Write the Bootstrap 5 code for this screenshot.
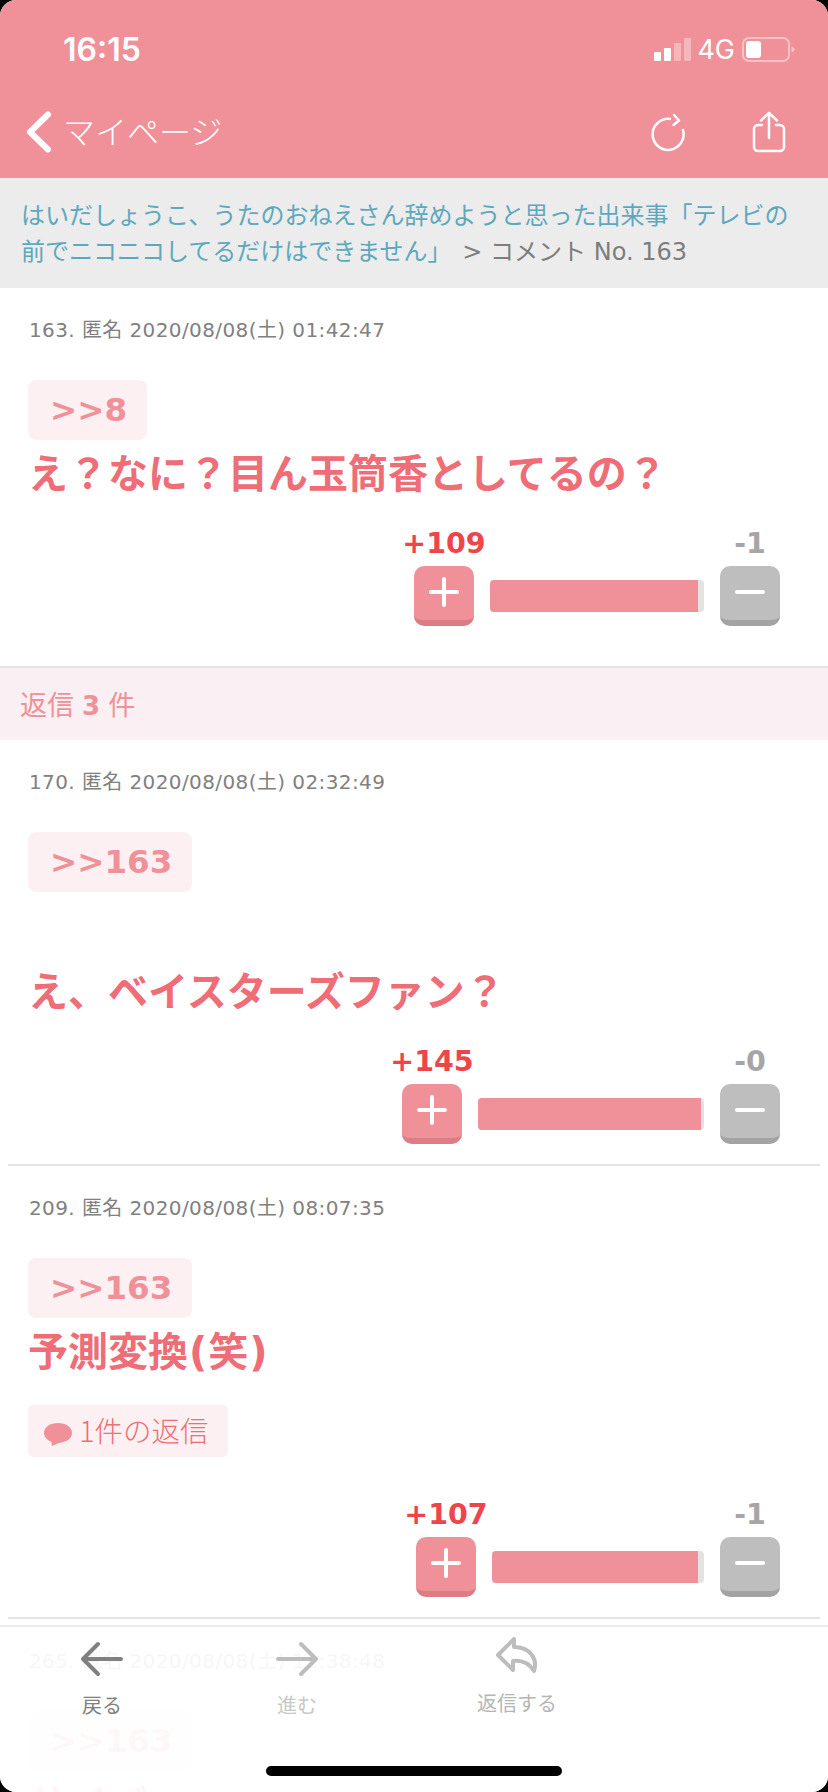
<!DOCTYPE html>
<html lang="ja">
<head>
  <meta charset="UTF-8">
  <title>コメント No. 163</title>
  <meta name="viewport" content="width=device-width, initial-scale=1">
  <link href="https://cdn.jsdelivr.net/npm/bootstrap@5.3.3/dist/css/bootstrap.min.css" rel="stylesheet">
  <style>
    body {
      background-color: #000;
      font-family: "Noto Sans CJK JP", sans-serif;
    }
    .screen {
      width: 828px;
      height: 1792px;
      background-color: #fff;
      border-radius: 16px;
      overflow: hidden;
      position: relative;
    }
    .top-bar {
      background-color: #f09199;
      height: 178px;
      color: #fff;
    }
    .status-row {
      height: 100px;
      padding: 0 32px 0 63px;
    }
    .clock {
      font-family: Inter, sans-serif;
      font-weight: 600;
      font-size: 32px;
    }
    .net-label {
      font-family: Inter, sans-serif;
      font-size: 27px;
      margin: 0 7px 0 6px;
    }
    .nav-row {
      height: 78px;
      padding: 0 40px 14px 25px;
    }
    .nav-title {
      font-size: 32px;
      font-weight: 300;
      margin: 0 0 4px 10px;
    }
    .nav-gap {
      margin-left: 66px;
    }
    .crumb {
      background-color: #ececec;
      height: 110px;
      padding: 18px 21px;
      font-size: 24px;
      line-height: 36px;
      color: #7d7d7d;
    }
    .crumb a {
      color: #5ea8bd;
      text-decoration: none;
    }
    .crumb-tail {
      font-family: "DejaVu Sans", "Noto Sans CJK JP", sans-serif;
    }
    .comment-meta {
      font-family: "DejaVu Sans", "Noto Sans CJK JP", sans-serif;
      font-size: 20px;
      line-height: 30px;
      color: #808080;
      margin: 0;
      padding-top: 27px;
      padding-left: 29px;
      letter-spacing: .4px;
    }
    .quote-pill {
      display: block;
      width: fit-content;
      height: 60px;
      margin: 35px 0 1px 28px;
      padding: 0 20px 0 22px;
      border-radius: 8px;
      background-color: #fcf0f2;
      color: #f09199;
      font-family: "DejaVu Sans", sans-serif;
      font-weight: 700;
      font-size: 32.5px;
      line-height: 60px;
    }
    .comment-body {
      margin: 0;
      padding-left: 28px;
      color: #ef6d77;
      font-size: 40px;
      font-weight: 700;
      line-height: 60px;
    }
    .body-gap {
      height: 66px;
    }
    .wide-paren {
      font-family: "DejaVu Sans", sans-serif;
      margin: 0 1px;
    }
    .vote-row {
      padding-right: 48px;
      margin-top: 27px;
    }
    .vote-row.after-chip {
      margin-top: 42px;
    }
    .vote-up, .vote-down {
      width: 60px;
      flex: none;
    }
    .vote-num {
      height: 32px;
      font-family: "DejaVu Sans", sans-serif;
      font-weight: 700;
      font-size: 28.5px;
      line-height: 32px;
      white-space: nowrap;
      margin-bottom: 6px;
    }
    .vote-up .vote-num {
      color: #ee454b;
    }
    .vote-down .vote-num {
      color: #a6a6a6;
    }
    .vote-btn {
      width: 60px;
      height: 60px;
      border-radius: 10px;
      box-sizing: border-box;
    }
    .vote-btn svg {
      margin-bottom: 2px;
    }
    .vote-up .vote-btn {
      background-color: #f09199;
      border-bottom: 6px solid #dc7d85;
    }
    .vote-down .vote-btn {
      background-color: #bebebe;
      border-bottom: 6px solid #a3a3a3;
    }
    .score-bar {
      height: 32px;
      margin: 52px 16px 0;
      background-color: #e3e3e3;
      border-radius: 4px;
      overflow: hidden;
      flex-grow: 1;
    }
    .score-fill {
      height: 100%;
      background-color: #f09199;
    }
    .replies-head {
      height: 74px;
      margin-top: 40px;
      border-top: 2px solid #e5e5e5;
      background-color: #faeff2;
      color: #f09199;
      font-size: 27px;
      line-height: 72px;
      padding-left: 20px;
    }
    .replies-head b {
      font-family: "DejaVu Sans", sans-serif;
      font-size: 26px;
      margin: 0 2px;
    }
    .item-line {
      border-top: 2px solid #e4e4e4;
      margin: 20px 8px 0;
    }
    .reply-chip {
      display: block;
      width: 200px;
      height: 52px;
      margin: 23px 0 0 28px;
      border-radius: 5px;
      background-color: #fcf0f2;
      color: #ef6d77;
      font-size: 28.5px;
      line-height: 50px;
      font-weight: 300;
      padding-left: 15px;
      white-space: nowrap;
    }
    .bottom-bar {
      position: absolute;
      left: 0;
      right: 0;
      bottom: 0;
      height: 167px;
      background-color: rgba(255, 255, 255, 0.93);
      border-top: 2px solid #ececec;
    }
    .tool-item {
      text-align: center;
      font-size: 20px;
      line-height: 30px;
    }
    .tool-item svg {
      display: block;
      margin: 0 auto;
    }
    .tool-back {
      width: 60px;
      margin: 14px 0 0 72px;
      color: #808080;
    }
    .tool-forward {
      width: 60px;
      margin: 14px 0 0 135px;
      color: #c8c8c8;
    }
    .tool-reply {
      width: 100px;
      margin: 8px 0 0 140px;
      color: #b5b5b5;
    }
    .tool-back div, .tool-forward div {
      margin-top: 13px;
    }
    .tool-reply div {
      margin-top: 13px;
    }
    .home-line {
      position: absolute;
      left: 266px;
      top: 139px;
      width: 296px;
      height: 10px;
      background-color: #000;
      border-radius: 5px;
    }
  </style>
</head>
<body>
<div class="screen">

  <div class="top-bar">
    <div class="status-row d-flex align-items-center justify-content-between">
      <span class="clock">16:15</span>
      <div class="d-flex align-items-center">
        <svg width="37" height="24" viewBox="0 0 37 24">
          <rect x="0" y="14" width="7" height="9" rx="1" fill="#fff"/>
          <rect x="10" y="10" width="7" height="13" rx="1" fill="#fff"/>
          <rect x="20" y="5" width="7" height="18" rx="1" fill="#fff" fill-opacity=".35"/>
          <rect x="30" y="0" width="7" height="23" rx="1" fill="#fff" fill-opacity=".35"/>
        </svg>
        <span class="net-label">4G</span>
        <svg width="54" height="26" viewBox="0 0 54 26">
          <rect x="1" y="1" width="46" height="23" rx="6" fill="none" stroke="#fff" stroke-opacity=".45" stroke-width="2"/>
          <rect x="4" y="4" width="15" height="17" rx="3" fill="#fff"/>
          <path d="M49.500 9.500c2 .5 3 2 3 3s-1 2.500-3 3z" fill="#fff" fill-opacity=".45"/>
        </svg>
      </div>
    </div>
    <div class="nav-row d-flex align-items-center">
      <svg width="28" height="44" viewBox="0 0 28 44">
        <path d="M23 4.500 L5 22 L23 39.500" fill="none" stroke="#fff" stroke-width="6" stroke-linecap="round" stroke-linejoin="round"/>
      </svg>
      <span class="nav-title">マイページ</span>
      <svg class="ms-auto" width="36" height="40" viewBox="0 0 36 40">
        <path d="M20 7 A15.500 15.500 0 1 0 33 18" fill="none" stroke="#fff" stroke-width="2.500" stroke-linecap="round"/>
        <path d="M24 3 L29 8.500 L23.500 13" fill="none" stroke="#fff" stroke-width="2.500" stroke-linecap="round" stroke-linejoin="round"/>
      </svg>
      <svg class="nav-gap" width="36" height="42" viewBox="0 0 36 42">
        <path d="M10 14 H6 A4 4 0 0 0 2 18 V36 A4 4 0 0 0 6 40 H28 A4 4 0 0 0 32 36 V18 A4 4 0 0 0 28 14 H24" fill="none" stroke="#fff" stroke-width="2.500" stroke-linecap="round"/>
        <path d="M17 27 V2 M9 9.500 L17 2 L25 9.500" fill="none" stroke="#fff" stroke-width="2.500" stroke-linecap="round" stroke-linejoin="round"/>
      </svg>
    </div>
  </div>

  <div class="crumb">
    <a href="#">はいだしょうこ、うたのおねえさん辞めようと思った出来事「テレビの前でニコニコしてるだけはできません」</a>&nbsp;&nbsp;<span class="crumb-tail">&gt; コメント No. 163</span>
  </div>

  <!-- 163 -->
  <div class="comment-block">
    <p class="comment-meta">163. 匿名 2020/08/08(土) 01:42:47</p>
    <a class="quote-pill text-decoration-none">&gt;&gt;8</a>
    <p class="comment-body">え？なに？目ん玉筒香としてるの？</p>
    <div class="vote-row d-flex justify-content-end">
      <div class="d-flex" style="width: 366px">
        <div class="vote-up">
          <div class="vote-num d-flex justify-content-center">+109</div>
          <div class="vote-btn d-flex align-items-center justify-content-center">
            <svg width="30" height="30" viewBox="0 0 30 30"><path d="M15 2 V28 M2 15 H28" stroke="#fff" stroke-width="4" stroke-linecap="round"/></svg>
          </div>
        </div>
        <div class="score-bar"><div class="score-fill" style="width: 97.200%"></div></div>
        <div class="vote-down">
          <div class="vote-num d-flex justify-content-center">-1</div>
          <div class="vote-btn d-flex align-items-center justify-content-center">
            <svg width="30" height="30" viewBox="0 0 30 30"><path d="M2 15 H28" stroke="#fff" stroke-width="4" stroke-linecap="round"/></svg>
          </div>
        </div>
      </div>
    </div>
  </div>

  <div class="replies-head">返信 <b>3</b> 件</div>

  <!-- 170 -->
  <div class="comment-block">
    <p class="comment-meta">170. 匿名 2020/08/08(土) 02:32:49</p>
    <a class="quote-pill text-decoration-none">&gt;&gt;163</a>
    <div class="body-gap"></div>
    <p class="comment-body">え、ベイスターズファン？</p>
    <div class="vote-row d-flex justify-content-end">
      <div class="d-flex" style="width: 378px">
        <div class="vote-up">
          <div class="vote-num d-flex justify-content-center">+145</div>
          <div class="vote-btn d-flex align-items-center justify-content-center">
            <svg width="30" height="30" viewBox="0 0 30 30"><path d="M15 2 V28 M2 15 H28" stroke="#fff" stroke-width="4" stroke-linecap="round"/></svg>
          </div>
        </div>
        <div class="score-bar"><div class="score-fill" style="width: 98.500%"></div></div>
        <div class="vote-down">
          <div class="vote-num d-flex justify-content-center">-0</div>
          <div class="vote-btn d-flex align-items-center justify-content-center">
            <svg width="30" height="30" viewBox="0 0 30 30"><path d="M2 15 H28" stroke="#fff" stroke-width="4" stroke-linecap="round"/></svg>
          </div>
        </div>
      </div>
    </div>
  </div>
  <div class="item-line"></div>

  <!-- 209 -->
  <div class="comment-block">
    <p class="comment-meta">209. 匿名 2020/08/08(土) 08:07:35</p>
    <a class="quote-pill text-decoration-none">&gt;&gt;163</a>
    <p class="comment-body">予測変換<span class="wide-paren">(</span>笑<span class="wide-paren">)</span></p>
    <a class="reply-chip text-decoration-none">
      <svg width="30" height="28" viewBox="0 0 30 28"><path d="M15 3 C23 3 29 7 29 13 C29 19 23 22 16 23 L9 26 L8.500 22 C4 20 1 17 1 13 C1 7 7 3 15 3 Z" fill="#f09199"/></svg>
      1件の返信
    </a>
    <div class="vote-row after-chip d-flex justify-content-end">
      <div class="d-flex" style="width: 364px">
        <div class="vote-up">
          <div class="vote-num d-flex justify-content-center">+107</div>
          <div class="vote-btn d-flex align-items-center justify-content-center">
            <svg width="30" height="30" viewBox="0 0 30 30"><path d="M15 2 V28 M2 15 H28" stroke="#fff" stroke-width="4" stroke-linecap="round"/></svg>
          </div>
        </div>
        <div class="score-bar"><div class="score-fill" style="width: 97.200%"></div></div>
        <div class="vote-down">
          <div class="vote-num d-flex justify-content-center">-1</div>
          <div class="vote-btn d-flex align-items-center justify-content-center">
            <svg width="30" height="30" viewBox="0 0 30 30"><path d="M2 15 H28" stroke="#fff" stroke-width="4" stroke-linecap="round"/></svg>
          </div>
        </div>
      </div>
    </div>
  </div>
  <div class="item-line"></div>

  <!-- 265, mostly behind the toolbar -->
  <div class="comment-block">
    <p class="comment-meta">265. 匿名 2020/08/08(土) 11:38:48</p>
    <a class="quote-pill text-decoration-none">&gt;&gt;163</a>
    <p class="comment-body">サイバー</p>
  </div>

  <div class="bottom-bar d-flex align-items-start">
    <div class="tool-item tool-back">
      <svg width="44" height="36" viewBox="0 0 44 36"><path d="M41 18 H4 M18 3 L3 18 L18 33" fill="none" stroke="#808080" stroke-width="4" stroke-linecap="round" stroke-linejoin="round"/></svg>
      <div>戻る</div>
    </div>
    <div class="tool-item tool-forward">
      <svg width="44" height="36" viewBox="0 0 44 36"><path d="M3 18 H40 M26 3 L41 18 L26 33" fill="none" stroke="#bdbdbd" stroke-width="4" stroke-linecap="round" stroke-linejoin="round"/></svg>
      <div>進む</div>
    </div>
    <div class="tool-item tool-reply">
      <svg width="46" height="40" viewBox="0 0 46 40"><path d="M20 4 L4 20 L19 35 V26 C28 25 35 28 40 36 C44 24 36 12 20 12 Z" fill="none" stroke="#bdbdbd" stroke-width="4" stroke-linejoin="round"/></svg>
      <div>返信する</div>
    </div>
    <div class="home-line"></div>
  </div>

</div>
<script src="https://cdn.jsdelivr.net/npm/bootstrap@5.3.3/dist/js/bootstrap.bundle.min.js"></script>
</body>
</html>
